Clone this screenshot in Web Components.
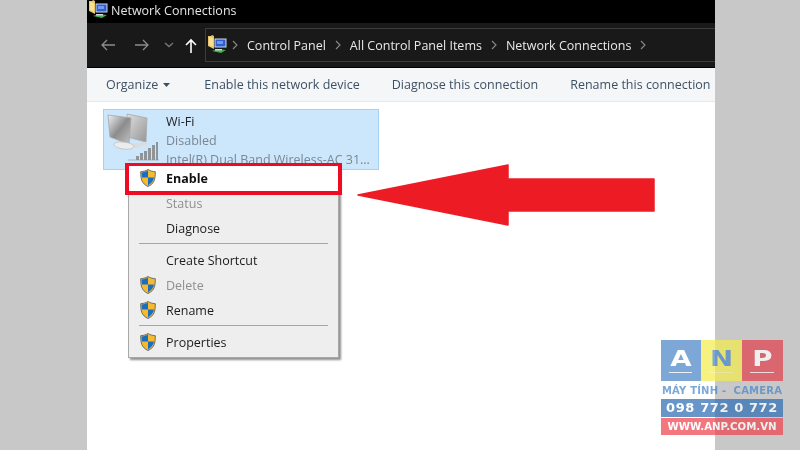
<!DOCTYPE html>
<html>
<head>
<meta charset="utf-8">
<title>Network Connections</title>
<style>
    html, body { margin: 0; height: 100%; }
    body { font-family: "Open Sans", "Noto Sans", sans-serif; overflow: hidden; }
</style>
</head>
<body>
<app-page>
    <title-bar>Network Connections</title-bar>
    <nav-bar>
        <crumb-item>Control Panel</crumb-item>
        <crumb-item>All Control Panel Items</crumb-item>
        <crumb-item>Network Connections</crumb-item>
        <crumb-item></crumb-item>
    </nav-bar>
    <command-bar>
        <span class="organize">Organize</span>
        <span>Enable this network device</span>
        <span>Diagnose this connection</span>
        <span>Rename this connection</span>
    </command-bar>
    <net-tile name="Wi-Fi" status="Disabled" device="Intel(R) Dual Band Wireless-AC 31..."></net-tile>
    <ctx-menu slot="overlay">
        <ctx-item shield bold highlight>Enable</ctx-item>
        <ctx-item disabled>Status</ctx-item>
        <ctx-item>Diagnose</ctx-item>
        <ctx-sep></ctx-sep>
        <ctx-item>Create Shortcut</ctx-item>
        <ctx-item shield disabled>Delete</ctx-item>
        <ctx-item shield>Rename</ctx-item>
        <ctx-sep></ctx-sep>
        <ctx-item shield>Properties</ctx-item>
    </ctx-menu>
    <red-arrow slot="overlay"></red-arrow>
    <anp-logo slot="overlay"></anp-logo>
</app-page>

<script>
    const folderIcon = `
        <svg width="22" height="22" viewBox="0 0 22 22" style="flex:none">
            <path d="M1 2h3l1-1 2 1v13l-6-3z" fill="#e9c46a"/>
            <path d="M2 3l4 1v9l-4-2z" fill="#f7e08e"/>
            <rect x="8" y="5" width="11" height="8" fill="#2f5fd0" stroke="#cfd8ea" stroke-width="1"/>
            <rect x="10" y="7" width="6" height="3" fill="#6c9bf2"/>
            <path d="M5 17l6-2 8 1-5 3z" fill="#3fae49"/>
            <path d="M8 15h7v1.5H8z" fill="#d5d9df"/>
        </svg>`;

    customElements.define('app-page', class extends HTMLElement {
        constructor() {
            super();
            this.attachShadow({mode: 'open'}).innerHTML = `
                <style>
                    :host { display: grid; grid-template-columns: 87px 628px 85px; width: 800px; height: 450px; background: #c8c8c8; position: relative; overflow: hidden; filter: blur(.3px); }
                    #window { grid-column: 2; background: #fff; height: 450px; display: flex; flex-direction: column; }
                </style>
                <div id="window"><slot></slot></div>
                <slot name="overlay"></slot>`;
        }
    });

    customElements.define('title-bar', class extends HTMLElement {
        constructor() {
            super();
            this.attachShadow({mode: 'open'}).innerHTML = `
                <style>
                    :host { display: flex; align-items: center; height: 23px; background: #000; color: #e4e4e4; font-size: 12.5px; padding-left: 1px; padding-bottom: 2px; box-sizing: border-box; }
                    svg { margin: -1px 1px 0 0; }
                </style>
                ${folderIcon}<slot></slot>`;
        }
    });

    customElements.define('nav-bar', class extends HTMLElement {
        constructor() {
            super();
            this.attachShadow({mode: 'open'}).innerHTML = `
                <style>
                    :host { display: flex; align-items: center; height: 45px; background: #191919; border-bottom: 1px solid #000; box-sizing: border-box; padding-left: 13px; }
                    svg.btn { flex: none; }
                    #address { flex: 1; height: 34px; margin-left: 8px; border: 1px solid #3c3c3c; border-right: 0; box-sizing: border-box; display: flex; align-items: center; padding-left: 1px; gap: 9px; }
                    #address svg { margin-right: -6px; }
                </style>
                <svg class="btn" width="16" height="14" viewBox="0 0 16 14" fill="none" stroke="#8c8c8c" stroke-width="1.3"><path d="M15 7H2M7 2L2 7l5 5"/></svg>
                <svg class="btn" width="16" height="14" viewBox="0 0 16 14" fill="none" stroke="#8c8c8c" stroke-width="1.3" style="margin-left:18px"><path d="M1 7h13M9 2l5 5-5 5"/></svg>
                <svg class="btn" width="10" height="6" viewBox="0 0 10 6" fill="none" stroke="#777" stroke-width="1.4" style="margin-left:14px"><path d="M1 1l4 3.5L9 1"/></svg>
                <svg class="btn" width="12" height="15" viewBox="0 0 12 15" fill="none" stroke="#fff" stroke-width="1.6" style="margin-left:11px"><path d="M6 15V2M1 7l5-5 5 5"/></svg>
                <div id="address">${folderIcon}<slot></slot></div>`;
        }
    });

    customElements.define('crumb-item', class extends HTMLElement {
        constructor() {
            super();
            this.attachShadow({mode: 'open'}).innerHTML = `
                <style>
                    :host { display: flex; align-items: center; color: #e8e8e8; font-size: 12.5px; }
                    svg { margin-right: 9px; flex: none; }
                </style>
                <svg width="6" height="10" viewBox="0 0 6 10" fill="none" stroke="#8a8a8a" stroke-width="1.1"><path d="M1 1l4 4-4 4"/></svg>
                <slot></slot>`;
        }
    });

    customElements.define('command-bar', class extends HTMLElement {
        constructor() {
            super();
            this.attachShadow({mode: 'open'}).innerHTML = `
                <style>
                    :host { display: flex; align-items: center; height: 34px; background: #f5f6f7; border-bottom: 1px solid #e6e8ea; box-sizing: border-box; color: #3d5166; font-size: 12.5px; padding-left: 19px; white-space: nowrap; overflow: hidden; }
                    ::slotted(span) { margin-right: 32px; }
                    ::slotted(.organize) { margin-right: 0; }
                </style>
                <slot></slot>`;
            const caret = document.createElementNS('http://www.w3.org/2000/svg', 'svg');
            caret.setAttribute('width', '7');
            caret.setAttribute('height', '4');
            caret.setAttribute('viewBox', '0 0 7 4');
            caret.style.cssText = 'margin:0 34px 0 5px;flex:none';
            caret.innerHTML = '<path d="M0 0h7L3.5 4z" fill="#3d5166"/>';
            this.querySelector('.organize').after(caret);
        }
    });

    customElements.define('net-tile', class extends HTMLElement {
        constructor() {
            super();
            this.attachShadow({mode: 'open'}).innerHTML = `
                <style>
                    :host { display: flex; width: 276px; height: 61px; margin: 7px 0 0 16px; box-sizing: border-box; background: #cce6fb; border: 1px solid #a3d2f5; font-size: 12.5px; color: #222; overflow: hidden; }
                    svg { flex: none; margin: 2px 0 0 3px; }
                    #text { margin-left: 1px; display: flex; flex-direction: column; white-space: nowrap; padding-top: 2px; line-height: 19px; }
                    .dim { color: #7b8791; }
                </style>
                <!-- origin is 107,112 on the page -->
                <svg width="58" height="55" viewBox="0 0 58 55">
                    <defs>
                        <linearGradient id="scr" x1="0" y1="0" x2="1" y2="1"><stop offset="0" stop-color="#f0f0f0"/><stop offset=".5" stop-color="#8c8c8c"/><stop offset="1" stop-color="#c4c4c4"/></linearGradient>
                        <linearGradient id="scr2" x1="0" y1="0" x2="1" y2="1"><stop offset="0" stop-color="#dedede"/><stop offset="1" stop-color="#969696"/></linearGradient>
                    </defs>
                    <path d="M20 2l20 4-1 24-19-5z" fill="url(#scr2)" stroke="#a9a9a9" stroke-width=".8"/>
                    <path d="M24 32l15-2 3 2-14 4z" fill="#dcdcdc"/>
                    <path d="M1 3l23 3-2 26L3 25z" fill="url(#scr)" stroke="#a5a5a5" stroke-width=".8"/>
                    <path d="M8 31c3-2 15-1 18 2s-3 5-10 4-11-4-8-6z" fill="#ececec" stroke="#b9b9b9" stroke-width=".7"/>
                    <path d="M21 48h31" stroke="#a9b5bf" stroke-width="1"/>
                    <path d="M29 48h3v-4h-3zM33 48h3v-7h-3zM37 48h3V39h-3zM41 48h3V36h-3zM45 48h3V33h-3zM49 48h2V30h-2z" fill="#8f9498"/>
                </svg>
                <div id="text">
                    <span>${this.getAttribute('name')}</span>
                    <span class="dim">${this.getAttribute('status')}</span>
                    <span class="dim">${this.getAttribute('device')}</span>
                </div>`;
        }
    });

    customElements.define('ctx-menu', class extends HTMLElement {
        constructor() {
            super();
            this.attachShadow({mode: 'open'}).innerHTML = `
                <style>
                    :host { position: absolute; left: 128px; top: 163px; width: 211px; background: #eeeeee; border: 1px solid #a8a8a8; box-sizing: border-box; box-shadow: 2px 2px 2px #8f8f8f; padding: 2px 0; font-size: 12.5px; color: #1c1c1c; }
                </style>
                <slot></slot>`;
        }
    });

    customElements.define('ctx-item', class extends HTMLElement {
        constructor() {
            super();
            const shield = this.hasAttribute('shield') ? `
                <svg width="16" height="18" viewBox="0 0 16 18">
                    <path d="M8 .5C6 1.800 3.500 2.600.7 2.700.7 10 1.500 14.500 8 17.500c6.500-3 7.300-7.500 7.300-14.800C12.500 2.600 10 1.800 8 .5z" fill="#f6bb2c" stroke="#56626e" stroke-width=".9"/>
                    <path d="M8 1.500C6.200 2.600 4 3.300 1.600 3.500c0 1.900.1 3.600.4 5.100h6z" fill="#1b6dc2"/>
                    <path d="M14 8.600c-.6 3-2.200 5.700-6 7.800V8.600z" fill="#1b6dc2"/>
                </svg>` : '';
            this.attachShadow({mode: 'open'}).innerHTML = `
                <style>
                    :host { display: flex; align-items: center; height: 25px; padding-left: 37px; position: relative; }
                    :host([disabled]) { color: #8f8f8f; }
                    :host([bold]) { font-weight: 700; color: #111; }
                    :host([highlight]) { background: #fff; }
                    :host([highlight])::after { content: ""; position: absolute; left: -4px; right: -4px; top: -3px; bottom: -4px; border: 4px solid #ed0c24; border-top-width: 3px; pointer-events: none; }
                    svg { position: absolute; left: 11px; top: 3px; }
                </style>
                ${shield}<slot></slot>`;
        }
    });

    customElements.define('ctx-sep', class extends HTMLElement {
        constructor() {
            super();
            this.attachShadow({mode: 'open'}).innerHTML = `
                <style>
                    :host { display: block; height: 1px; margin: 2px 10px 4px 10px; background: #a6a6a6; }
                </style>`;
        }
    });

    customElements.define('red-arrow', class extends HTMLElement {
        constructor() {
            super();
            this.attachShadow({mode: 'open'}).innerHTML = `
                <style>
                    :host { position: absolute; left: 355px; top: 163px; width: 302px; height: 64px; }
                </style>
                <svg width="302" height="64" viewBox="0 0 302 64">
                    <path d="M3 32L153 2v14h146v32H153v14z" fill="#ed1c24" stroke="#ed1c24" stroke-width="1.500" stroke-linejoin="round"/>
                </svg>`;
        }
    });

    customElements.define('anp-logo', class extends HTMLElement {
        constructor() {
            super();
            this.attachShadow({mode: 'open'}).innerHTML = `
                <style>
                    :host { position: absolute; left: 661px; top: 340px; width: 122px; height: 96px; opacity: .72; display: flex; flex-direction: column; font-family: "DejaVu Sans", sans-serif; font-weight: 700; }
                    #squares { display: grid; grid-template-columns: 40px 41px 41px; height: 41px; color: #fff; font-size: 20.500px; text-align: center; }
                    #squares div { line-height: 38px; position: relative; }
                    #squares span { display: inline-block; transform: scaleX(1.35); }
                    #squares div::after { content: ""; position: absolute; left: 8px; right: 9px; bottom: 8px; height: 1.500px; background: #fff; opacity: .85; }
                    #squares .a { background: #4a86c8; }
                    #squares .n { background: #f4ec4e; color: #4a86c8; }
                    #squares .n::after { background: #f8f3a0; }
                    #squares .p { background: #e2434d; }
                    #tag { height: 18px; line-height: 20px; font-size: 10px; color: #4a86c8; white-space: nowrap; text-align: center; letter-spacing: .2px; }
                    #phone { height: 18px; line-height: 18px; background: #2f6fb4; color: #fff; font-size: 13px; text-align: center; white-space: nowrap; letter-spacing: .6px; }
                    #web { margin-top: 1px; height: 17px; line-height: 17px; background: #f0444e; color: #fff; font-size: 10.200px; text-align: center; white-space: nowrap; }
                </style>
                <div id="squares"><div class="a"><span>A</span></div><div class="n"><span>N</span></div><div class="p"><span>P</span></div></div>
                <div id="tag">MÁY TÍNH -&nbsp; CAMERA</div>
                <div id="phone">098 772 0 772</div>
                <div id="web">WWW.ANP.COM.VN</div>`;
        }
    });
</script>
</body>
</html>
